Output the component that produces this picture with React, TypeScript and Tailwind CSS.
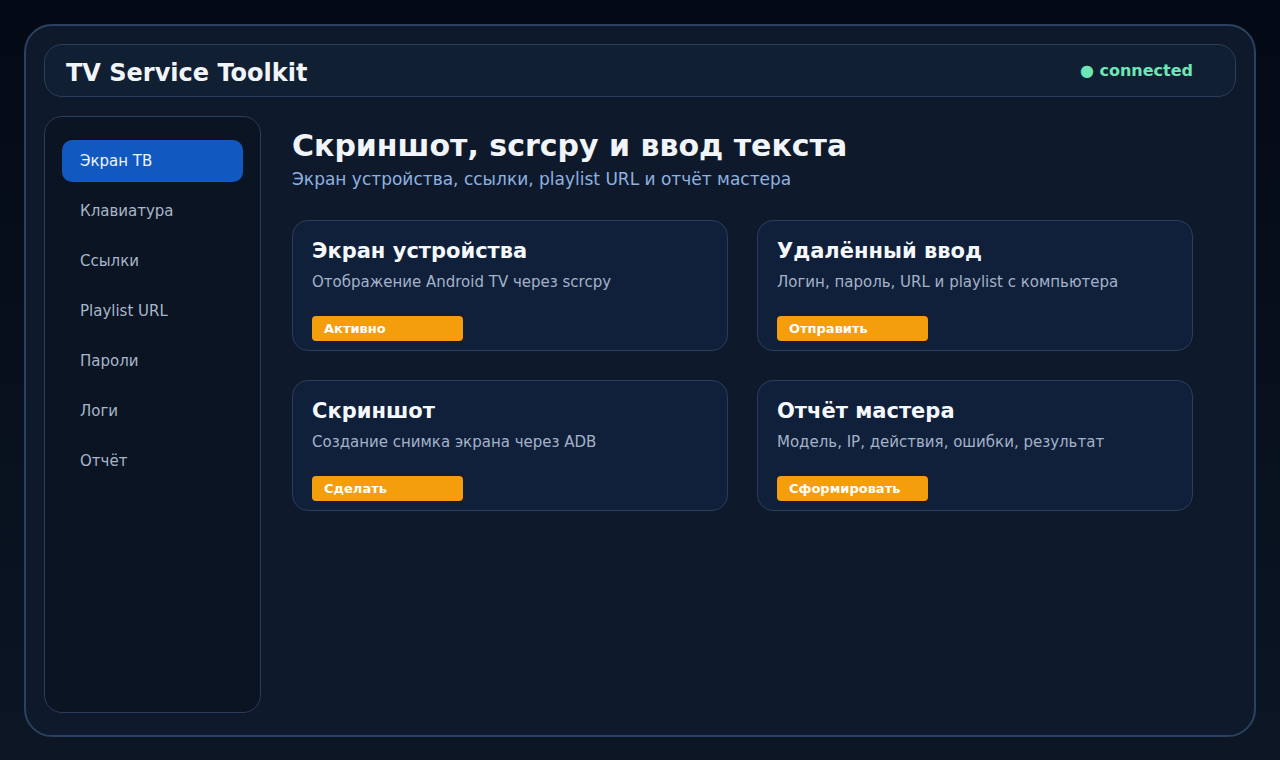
import React from "react";

const nav = ["Экран ТВ", "Клавиатура", "Ссылки", "Playlist URL", "Пароли", "Логи", "Отчёт"];

const cards = [
  { t: "Экран устройства", d: "Отображение Android TV через scrcpy", b: "Активно" },
  { t: "Удалённый ввод", d: "Логин, пароль, URL и playlist с компьютера", b: "Отправить" },
  { t: "Скриншот", d: "Создание снимка экрана через ADB", b: "Сделать" },
  { t: "Отчёт мастера", d: "Модель, IP, действия, ошибки, результат", b: "Сформировать" },
];

export default function App() {
  return (
    <div className="w-[1280px] h-[760px] p-6 bg-gradient-to-b from-[#040a15] to-[#0c1624] overflow-hidden font-['DejaVu_Sans',Verdana,sans-serif]">
      <div className="h-[713px] rounded-[28px] border-2 border-[#2b4062] bg-[#0e1a2b] pt-[18px] px-[18px] pb-[22px] flex flex-col gap-[19px]">
        <header className="h-[53px] shrink-0 rounded-[18px] border border-[#2a3d5a] bg-[#111f33] flex items-center justify-between px-[21px]">
          <h1 className="text-[24px] font-bold text-[#f1f5f9] leading-none pt-[5px]">TV Service Toolkit</h1>
          <div className="mr-[21px] text-[16px] font-bold text-[#6ee7b7] leading-none">● connected</div>
        </header>
        <div className="flex-1 flex gap-8 min-h-0">
          <aside className="w-[217px] shrink-0 rounded-[18px] border border-[#2a3d5a] bg-[#0a1423] pt-[23px] px-[17px] flex flex-col gap-2">
            {nav.map((n, i) => (
              <div
                key={n}
                className={
                  i === 0
                    ? "h-[42px] rounded-[10px] bg-[#1159c0] text-[#eef4ff] text-[15px] flex items-center pl-[18px]"
                    : "h-[42px] rounded-[10px] text-[#a8b6c9] text-[15px] flex items-center pl-[18px]"
                }
              >
                {n}
              </div>
            ))}
          </aside>
          <main className="pt-[12px] w-[901px] -ml-[1px]">
            <h2 className="text-[30px] font-bold leading-[36px] text-[#f1f5f9]">Скриншот, scrcpy и ввод текста</h2>
            <p className="mt-[4px] text-[17px] leading-[22px] text-[#8fb1e0]">Экран устройства, ссылки, playlist URL и отчёт мастера</p>
            <div className="mt-[30px] grid grid-cols-[436px_436px] gap-x-[29px] gap-y-[29px]">
              {cards.map((c) => (
                <div key={c.t} className="h-[131px] rounded-[16px] border border-[#2a3d5a] bg-[#11203a] pt-[18px] px-[19px]">
                  <div className="text-[21px] font-bold leading-[24px] text-[#f5f8fc]">{c.t}</div>
                  <div className="mt-[10px] text-[15px] leading-[18px] text-[#a3b2c8]">{c.d}</div>
                  <div className="mt-[25px] w-[151px] h-[25px] rounded-[4px] bg-[#f59e0b] flex items-center pl-[12px] text-[13px] font-bold text-white">
                    {c.b}
                  </div>
                </div>
              ))}
            </div>
          </main>
        </div>
      </div>
    </div>
  );
}
